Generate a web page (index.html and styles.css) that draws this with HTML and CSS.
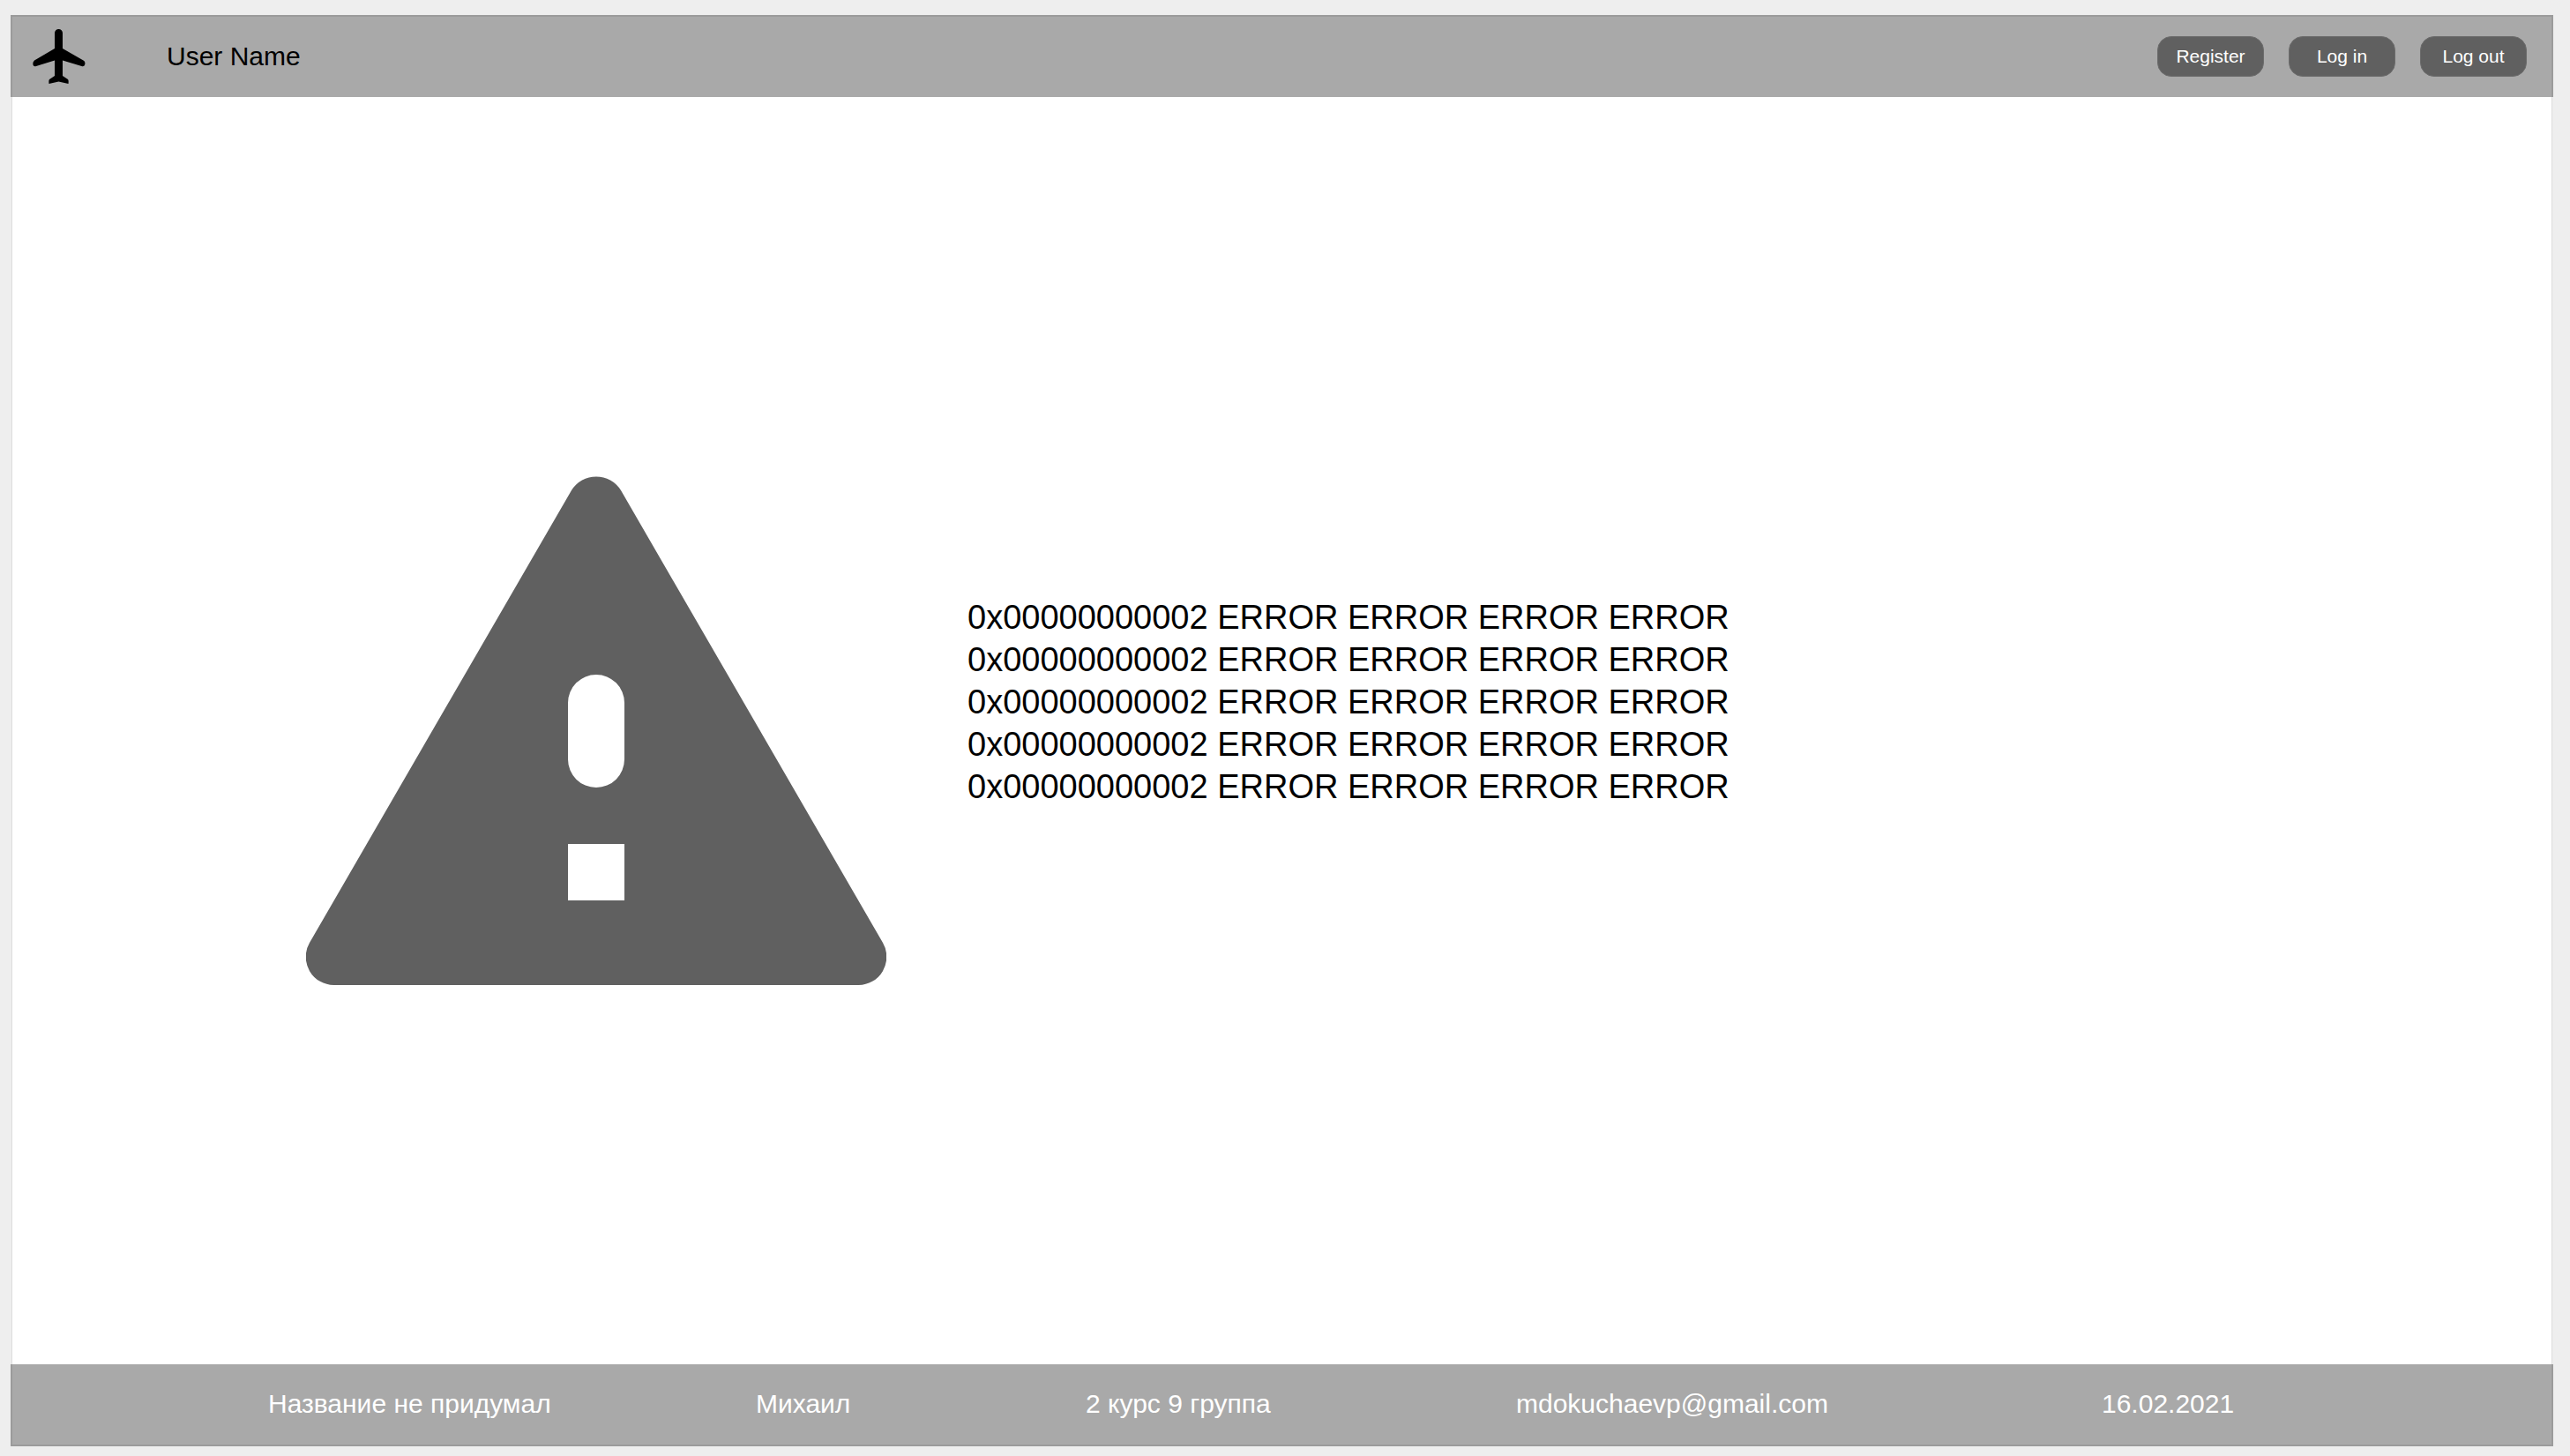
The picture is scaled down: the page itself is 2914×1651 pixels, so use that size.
FILE: index.html
```html
<!DOCTYPE html>
<html lang="ru">
<head>
<meta charset="utf-8">
<meta name="viewport" content="width=device-width, initial-scale=1">
<title>Error</title>
<link rel="stylesheet" href="styles.css">
</head>
<body>
<div class="page">
  <header class="header">
    <svg class="logo" viewBox="0 0 60 62" aria-hidden="true"><path d="M25 4.500a4.500 4.500 0 0 1 9 0V22L57.500 35.500Q60 37 59.300 40Q58.500 43 55.500 42L34 35.500V53L40 57Q41 58 40.500 62L29.500 59.500L18.500 62Q18 58 19 57L25 53V35.500L4 42Q1 43 .300 40Q0 37 2 35.500L25 22Z"/></svg>
    <span class="user">User Name</span>
    <nav class="actions" aria-label="Account">
      <button class="button" type="button">Register</button>
      <button class="button" type="button">Log in</button>
      <button class="button" type="button">Log out</button>
    </nav>
  </header>
  <main class="main">
    <svg class="warning" viewBox="0 0 658 577" aria-hidden="true"><path fill-rule="evenodd" d="M301 16A33 33 0 0 1 357 16L654 529A32 32 0 0 1 626 577H32A32 32 0 0 1 4 529ZM297 257V321A32 32 0 0 0 361 321V257A32 32 0 0 0 297 257ZM297 417V481H361V417Z"/></svg>
    <div class="errors">
      <p>0x00000000002 ERROR ERROR ERROR ERROR</p>
      <p>0x00000000002 ERROR ERROR ERROR ERROR</p>
      <p>0x00000000002 ERROR ERROR ERROR ERROR</p>
      <p>0x00000000002 ERROR ERROR ERROR ERROR</p>
      <p>0x00000000002 ERROR ERROR ERROR ERROR</p>
    </div>
  </main>
  <footer class="footer">
    <span>Название не придумал</span>
    <span>Михаил</span>
    <span>2 курс 9 группа</span>
    <span>mdokuchaevp@gmail.com</span>
    <span>16.02.2021</span>
  </footer>
</div>
</body>
</html>
```
FILE: styles.css
```css
* {
  box-sizing: border-box;
}

body {
  margin: 0;
  background: #eeeeee;
  color: #000000;
  font-family: "Liberation Sans", Arial, sans-serif;
  font-size: 30px;
}

.page {
  display: flex;
  flex-direction: column;
  min-height: 100vh;
  padding: 17px 19px 11px 12px;
}

.header,
.footer {
  min-height: 93px;
  background: #a9a9a9;
  border: 2px solid #9b9b9b;
}

.header {
  display: flex;
  align-items: center;
  padding: 0 28px 2px 23px;
  border-bottom: 0;
}

.logo {
  width: 60px;
  height: 62px;
}

.user {
  margin-left: 92px;
}

.actions {
  display: flex;
  gap: 28px;
  margin-left: auto;
}

.button {
  width: 121px;
  height: 46px;
  padding: 0;
  border: 1px solid #6c6c6c;
  border-radius: 16px;
  background: #606060;
  color: #ffffff;
  font: inherit;
  font-size: 21px;
}

.main {
  display: flex;
  flex: 1;
  align-items: flex-start;
  gap: 92px;
  margin: 0 1px;
  padding: 430px 333px 0;
  background: #ffffff;
  border: solid #dddddd;
  border-width: 0 1px;
}

.warning {
  flex: none;
  width: 658px;
  height: 577px;
  fill: #606060;
}

.errors {
  padding-top: 136px;
  font-size: 38px;
  line-height: 48px;
}

.errors p {
  margin: 0;
}

.footer {
  display: grid;
  grid-template-columns: 553fr 374fr 488fr 664fr 510fr;
  align-items: center;
  padding: 0 0 2px 290px;
  border-top: 0;
  color: #ffffff;
}
```
